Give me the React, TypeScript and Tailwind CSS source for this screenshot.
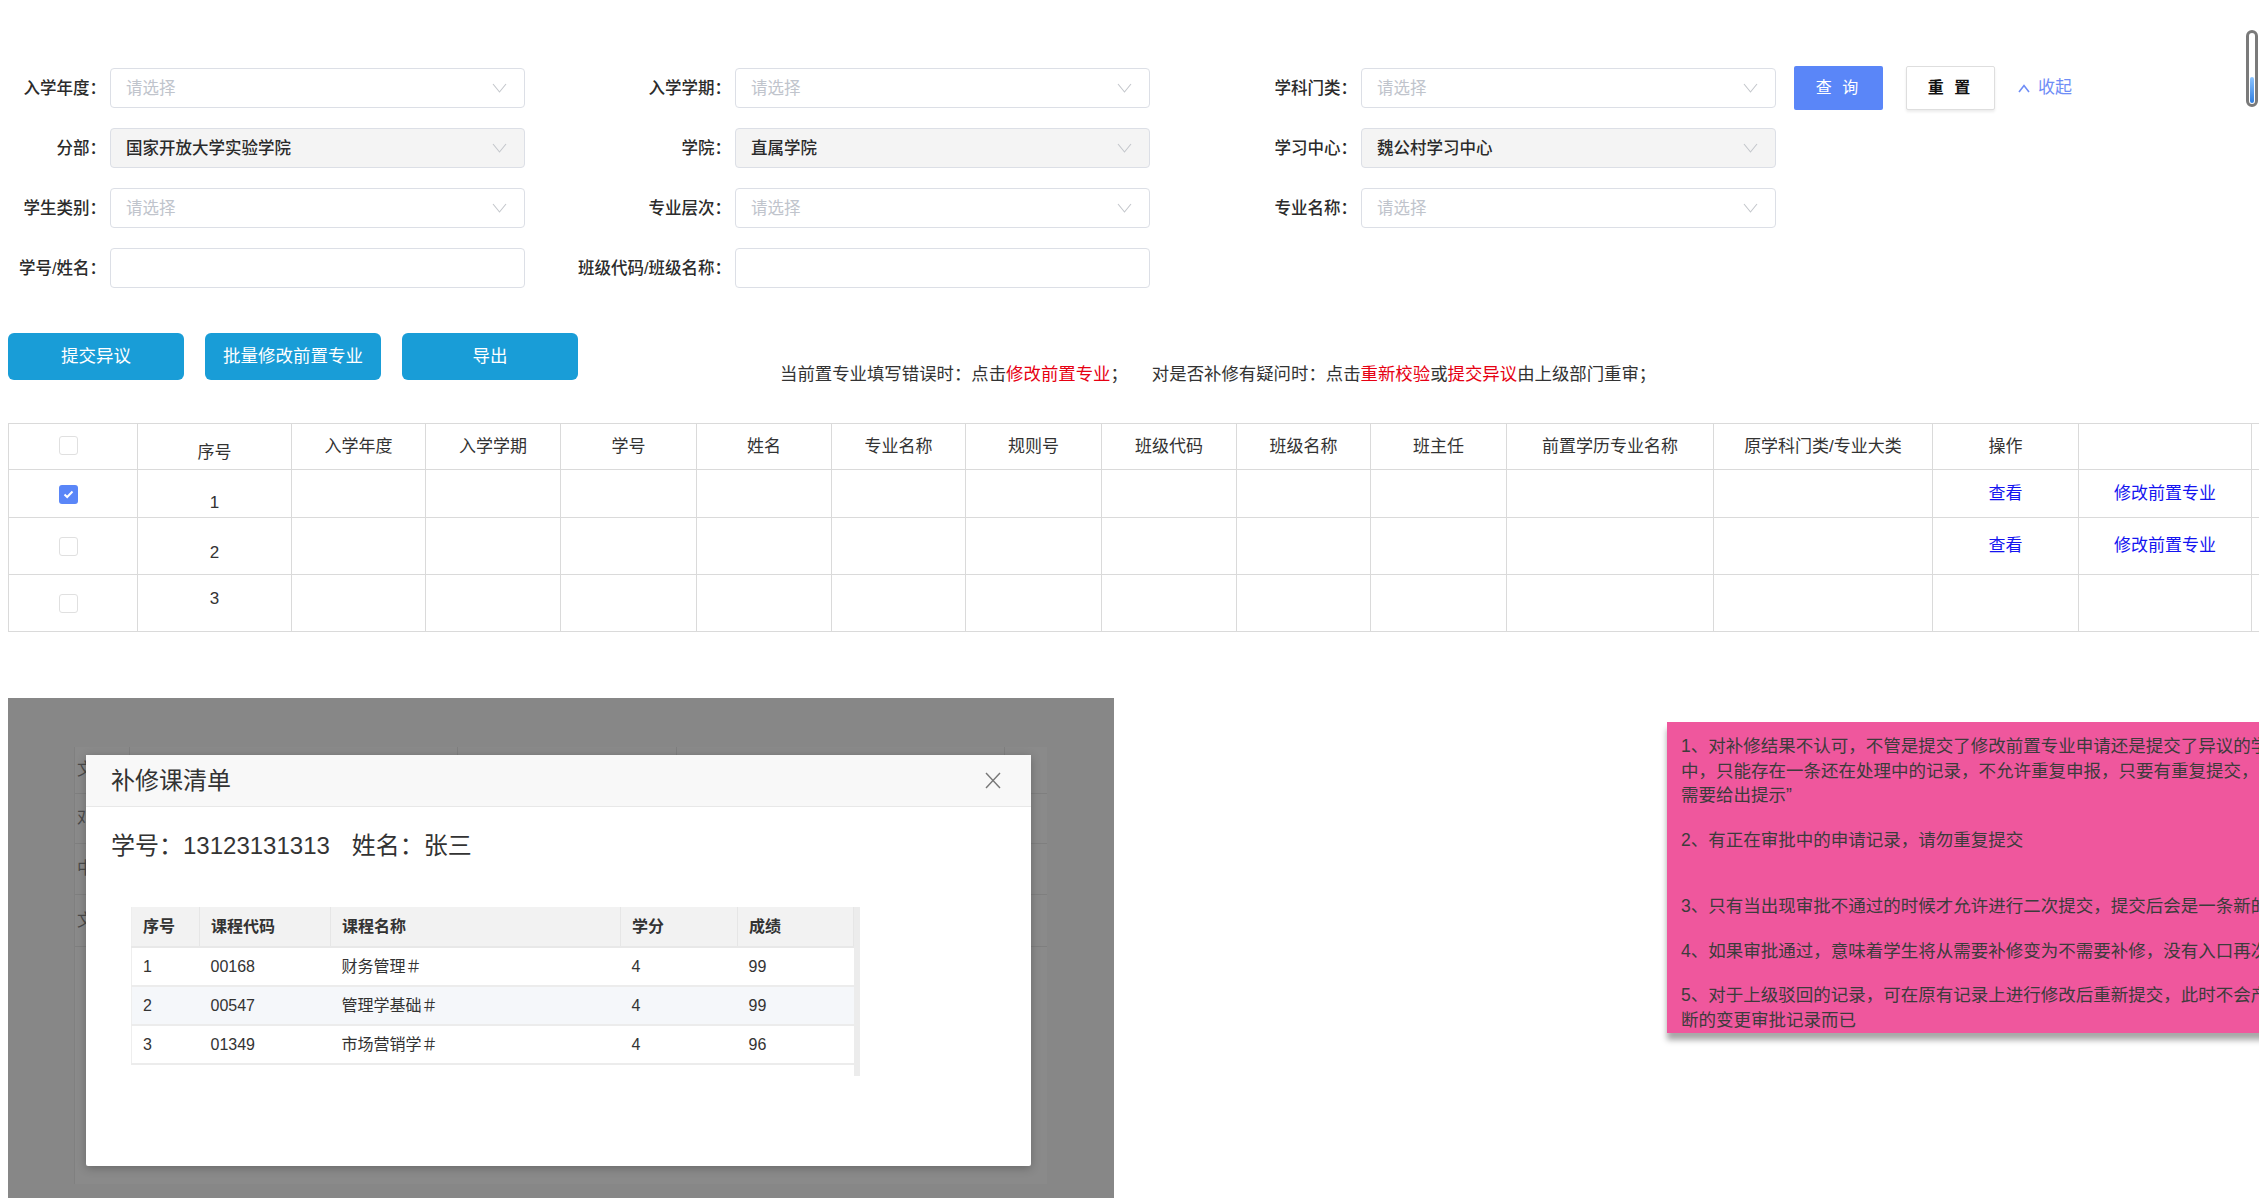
import React from "react";

type Field = { label: string; value?: string; disabled?: boolean; input?: boolean };

const ROWS: Field[][] = [
  [{ label: "入学年度：" }, { label: "入学学期：" }, { label: "学科门类：" }],
  [
    { label: "分部：", value: "国家开放大学实验学院", disabled: true },
    { label: "学院：", value: "直属学院", disabled: true },
    { label: "学习中心：", value: "魏公村学习中心", disabled: true },
  ],
  [{ label: "学生类别：" }, { label: "专业层次：" }, { label: "专业名称：" }],
  [{ label: "学号/姓名：", input: true }, { label: "班级代码/班级名称：", input: true }],
];

// label box widths for the three form columns
const LABEL_W = ["w-[106px]", "w-[206px]", "w-[207px]"];

const COLS = [129, 154, 134, 135, 136, 135, 134, 136, 135, 134, 136, 207, 219, 146, 173, 60];
const HEADERS = ["", "序号", "入学年度", "入学学期", "学号", "姓名", "专业名称", "规则号", "班级代码", "班级名称", "班主任", "前置学历专业名称", "原学科门类/专业大类", "操作", "", ""];

const BODY = [
  { n: 1, h: "h-[48px]", pad: "pt-[18px]", checked: true, links: true },
  { n: 2, h: "h-[57px]", pad: "pt-[14px]", checked: false, links: true },
  { n: 3, h: "h-[57px]", pad: "pb-[8px]", checked: false, links: false },
];

const COURSES = [
  { no: 1, code: "00168", name: "财务管理＃", credit: 4, score: 99 },
  { no: 2, code: "00547", name: "管理学基础＃", credit: 4, score: 99 },
  { no: 3, code: "01349", name: "市场营销学＃", credit: 4, score: 96 },
];

function Chevron() {
  return (
    <svg width="15" height="10" viewBox="0 0 15 10" fill="none">
      <polyline points="1,1 7.5,9 14,1" stroke="#c4c7cc" strokeWidth="1.1" />
    </svg>
  );
}

function Checkbox({ checked }: { checked?: boolean }) {
  if (checked) {
    return (
      <span className="inline-flex w-[19px] h-[19px] rounded-[3px] bg-[#5a86f8] items-center justify-center">
        <svg width="11" height="9" viewBox="0 0 11 9" fill="none">
          <polyline points="1.5,4.5 4.2,7 9.5,1.5" stroke="white" strokeWidth="2" />
        </svg>
      </span>
    );
  }
  return <span className="inline-block w-[19px] h-[19px] rounded-[3px] border border-[#e0e0e0] bg-white" />;
}

function FormControl({ f }: { f: Field }) {
  if (f.input) {
    return <div className="w-[415px] h-[40px] rounded-[4px] border border-[#dcdfe6] bg-white" />;
  }
  return (
    <div
      className={`w-[415px] h-[40px] flex items-center justify-between rounded-[4px] border border-[#dcdfe6] pl-[15px] pr-[17px] ${
        f.disabled ? "bg-[#f4f4f4]" : "bg-white"
      }`}
    >
      <span className={f.value ? "text-[#2b2b2b] font-medium" : "text-[#c0c4cc]"}>{f.value ?? "请选择"}</span>
      <Chevron />
    </div>
  );
}

export default function App() {
  return (
    <div className="relative w-[2259px] h-[1198px] overflow-hidden bg-white text-[#333] font-['Liberation_Sans','Noto_Sans_CJK_SC',sans-serif]">
      {/* scroll indicator */}
      <div className="absolute right-[1px] top-[30px] w-[12px] h-[77px] rounded-full border-[3px] border-[#7a7a7a] flex flex-col justify-end p-[1px]">
        <div className="h-[26px] rounded-full bg-gradient-to-b from-[#8cc4ff] to-[#2f7fe0]" />
      </div>

      {/* search form */}
      <div className="pt-[68px] flex flex-col gap-[20px] text-[16.5px]">
        {ROWS.map((row, ri) => (
          <div key={ri} className="flex items-center h-[40px]">
            {row.map((f, ci) => (
              <React.Fragment key={f.label}>
                <label className={`${LABEL_W[ci]} mr-[4px] shrink-0 text-right font-medium text-[#2b2b2b] whitespace-nowrap`}>
                  {f.label}
                </label>
                <FormControl f={f} />
              </React.Fragment>
            ))}
            {ri === 0 && (
              <div className="flex items-center ml-[18px]">
                <button className="w-[89px] h-[44px] rounded-[2px] bg-[#5a86f8] text-white text-[16px] tracking-[3px]">
                  查 询
                </button>
                <button className="ml-[23px] w-[89px] h-[44px] rounded-[2px] border border-[#dedede] bg-white text-[16px] font-bold text-[#111] tracking-[3px] shadow-[0_2px_3px_rgba(0,0,0,0.08)]">
                  重 置
                </button>
                <span className="ml-[23px] flex items-center gap-[8px] text-[#6f8df6] text-[17px]">
                  <svg width="12" height="9" viewBox="0 0 12 9" fill="none">
                    <polyline points="1,8 6,1.5 11,8" stroke="#6f8df6" strokeWidth="1.6" />
                  </svg>
                  收起
                </span>
              </div>
            )}
          </div>
        ))}
      </div>

      {/* actions + notice */}
      <div className="mt-[45px] ml-[8px] flex items-start">
        {["提交异议", "批量修改前置专业", "导出"].map((t) => (
          <button
            key={t}
            className="w-[176px] h-[47px] mr-[21px] rounded-[6px] bg-[#199dd7] text-white text-[17.5px]"
          >
            {t}
          </button>
        ))}
        <p className="ml-[181px] mt-[29px] text-[17.4px] leading-[24px] text-[#333] whitespace-nowrap">
          当前置专业填写错误时：点击<span className="text-[#e60012]">修改前置专业</span>；
          <span className="ml-[24px]">对是否补修有疑问时：点击</span>
          <span className="text-[#e60012]">重新校验</span>或<span className="text-[#e60012]">提交异议</span>由上级部门重审；
        </p>
      </div>

      {/* data table */}
      <table className="mt-[37px] ml-[8px] table-fixed border-collapse text-[17px] text-[#333] w-[2303px]">
        <colgroup>
          {COLS.map((w, i) => (
            <col key={i} style={{ width: w }} />
          ))}
        </colgroup>
        <thead>
          <tr className="h-[46px]">
            {HEADERS.map((h, i) => (
              <th
                key={i}
                className={`border border-[#dadada] font-normal text-center align-middle ${
                  i === 1 ? "pt-[12px]" : i === 0 ? "pr-[10px] pb-[4px]" : ""
                }`}
              >
                {i === 0 ? <span className="inline-flex align-middle"><Checkbox /></span> : h}
              </th>
            ))}
          </tr>
        </thead>
        <tbody>
          {BODY.map((r) => (
            <tr key={r.n} className={r.h}>
              {COLS.map((_, i) => (
                <td
                  key={i}
                  className={`border border-[#dadada] text-center align-middle ${
                    i === 1 ? r.pad : i === 0 ? "pr-[10px]" : ""
                  }`}
                >
                  {i === 0 && (
                    <span className="inline-flex align-middle">
                      <Checkbox checked={r.checked} />
                    </span>
                  )}
                  {i === 1 && r.n}
                  {i === 13 && r.links && <span className="text-[#1414f0]">查看</span>}
                  {i === 14 && r.links && <span className="text-[#1414f0]">修改前置专业</span>}
                </td>
              ))}
            </tr>
          ))}
        </tbody>
      </table>

      {/* lower area */}
      <div className="mt-[66px] flex items-start">
        {/* dimmed dialog capture */}
        <div className="relative shrink-0 ml-[8px] w-[1106px] h-[520px] bg-[#878787] pl-[66px] pt-[49px] overflow-hidden">
          <div className="w-[973px] h-[437px] bg-[#8a8a8a] border-l border-[#808080] overflow-hidden">
            <div className="grid grid-cols-[55px_328px_219px_328px_1fr] border-b border-[#7f7f7f] h-[47px] text-[17px] text-[#4a4a4a]">
              <div className="border-r border-[#7f7f7f] flex items-center pl-[2px]">文</div>
              <div className="border-r border-[#7f7f7f]" />
              <div className="border-r border-[#7f7f7f]" />
              <div className="border-r border-[#7f7f7f]" />
              <div />
            </div>
            {["邓", "中", "文"].map((c, i) => (
              <div
                key={i}
                className={`flex items-center pl-[2px] border-b border-[#7f7f7f] text-[17px] text-[#4a4a4a] ${
                  i === 0 ? "h-[50px]" : i === 1 ? "h-[51px]" : "h-[52px]"
                }`}
              >
                {c}
              </div>
            ))}
          </div>

          {/* modal */}
          <div className="absolute left-[78px] top-[57px] w-[945px] h-[411px] bg-white rounded-[2px] shadow-[0_2px_10px_rgba(0,0,0,0.25)] flex flex-col">
            <div className="h-[52px] shrink-0 bg-[#f8f8f8] border-b border-[#e8e8e8] flex items-center justify-between pl-[25px] pr-[30px]">
              <span className="text-[24px] text-[#333]">补修课清单</span>
              <svg width="16" height="17" viewBox="0 0 16 17" fill="none">
                <line x1="1" y1="1" x2="15" y2="16" stroke="#777" strokeWidth="1.4" />
                <line x1="15" y1="1" x2="1" y2="16" stroke="#777" strokeWidth="1.4" />
              </svg>
            </div>
            <p className="pl-[25px] pt-[23px] text-[24px] leading-[32px] text-[#333]">
              学号：13123131313<span className="ml-[22px]">姓名：张三</span>
            </p>
            <div className="ml-[45px] mt-[45px] flex items-start">
              <table className="table-fixed border-collapse w-[722px] text-[16px] text-[#333] border-l border-[#eeeeee]">
                <colgroup>
                  <col style={{ width: 68 }} />
                  <col style={{ width: 131 }} />
                  <col style={{ width: 290 }} />
                  <col style={{ width: 117 }} />
                  <col style={{ width: 116 }} />
                </colgroup>
                <thead>
                  <tr className="h-[40px] bg-[#f2f2f2]">
                    {["序号", "课程代码", "课程名称", "学分", "成绩"].map((h) => (
                      <th
                        key={h}
                        className="text-left font-bold pl-[11px] border-r border-[#e6e6e6] border-b-2 border-b-[#e8e8e8]"
                      >
                        {h}
                      </th>
                    ))}
                  </tr>
                </thead>
                <tbody>
                  {COURSES.map((c, i) => (
                    <tr key={c.no} className={`h-[39px] border-b-2 border-[#ececec] ${i === 1 ? "bg-[#f5f7fa]" : ""}`}>
                      <td className="pl-[11px]">{c.no}</td>
                      <td className="pl-[11px]">{c.code}</td>
                      <td className="pl-[11px]">{c.name}</td>
                      <td className="pl-[11px]">{c.credit}</td>
                      <td className="pl-[11px]">{c.score}</td>
                    </tr>
                  ))}
                </tbody>
              </table>
              <div className="w-[6px] h-[169px] bg-[#ececec]" />
            </div>
          </div>
        </div>

        {/* pink notes */}
        <div className="ml-[553px] mt-[24px] w-[760px] h-[311px] shrink-0 bg-[#ef579d] shadow-[0_7px_6px_rgba(0,0,0,0.35)] pl-[14px] pt-[12px] text-[17.5px] leading-[24.5px] text-[#3c3c3c] whitespace-nowrap">
          <p className="mb-[20px]">
            1、对补修结果不认可，不管是提交了修改前置专业申请还是提交了异议的学生，在审批流程
            <br />
            中，只能存在一条还在处理中的记录，不允许重复申报，只要有重复提交，系统都
            <br />
            需要给出提示”
          </p>
          <p className="mb-[42px]">2、有正在审批中的申请记录，请勿重复提交</p>
          <p className="mb-[20px]">3、只有当出现审批不通过的时候才允许进行二次提交，提交后会是一条新的申请记录</p>
          <p className="mb-[20px]">4、如果审批通过，意味着学生将从需要补修变为不需要补修，没有入口再次提交</p>
          <p>
            5、对于上级驳回的记录，可在原有记录上进行修改后重新提交，此时不会产生新的记录，只会产生不
            <br />
            断的变更审批记录而已
          </p>
        </div>
      </div>
    </div>
  );
}
